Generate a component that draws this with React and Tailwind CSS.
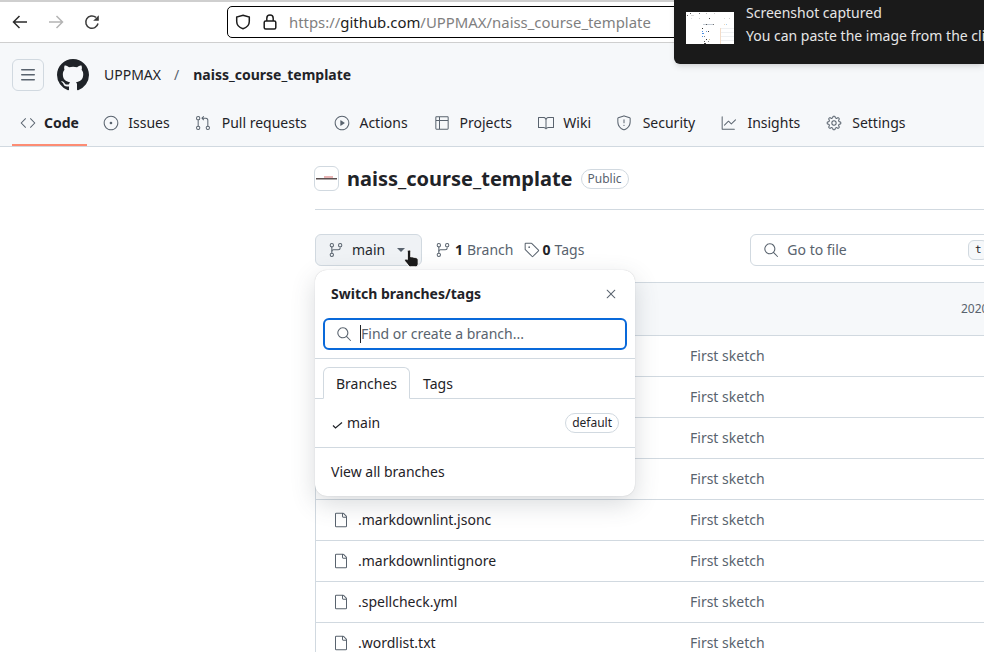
import React from "react";
import {
    GoCode,
    GoIssueOpened,
    GoGitPullRequest,
    GoPlay,
    GoTable,
    GoBook,
    GoShield,
    GoGraph,
    GoGear,
    GoGitBranch,
    GoTag,
    GoSearch,
    GoFile,
    GoX,
} from "react-icons/go";

const tabs = [
    { name: "Code", icon: GoCode, active: true },
    { name: "Issues", icon: GoIssueOpened },
    { name: "Pull requests", icon: GoGitPullRequest },
    { name: "Actions", icon: GoPlay },
    { name: "Projects", icon: GoTable },
    { name: "Wiki", icon: GoBook },
    { name: "Security", icon: GoShield },
    { name: "Insights", icon: GoGraph },
    { name: "Settings", icon: GoGear },
];

const files = [
    ".github",
    ".gitignore",
    ".lycheeignore",
    ".markdownlint.yml",
    ".markdownlint.jsonc",
    ".markdownlintignore",
    ".spellcheck.yml",
    ".wordlist.txt",
];

// little dots of the screenshot thumbnail: x, y, w, h, colour
const thumbDots = [
    [4, 1, 1, 1, "#555"], [13, 1, 1, 1, "#777"], [20, 1, 1, 1, "#bbb"], [28, 1, 1, 1, "#ccc"],
    [1, 3, 1, 1, "#666"], [5, 3, 3, 1, "#ddd"], [5, 6, 1, 1, "#ddd"], [13, 6, 1, 1, "#ccc"],
    [23, 6, 1, 1, "#444"], [38, 6, 1, 1, "#ddd"], [43, 6, 1, 1, "#ccc"], [17, 12, 10, 1, "#c5cdd6"],
    [20, 12, 1, 1, "#555"], [27, 12, 1, 1, "#777"], [38, 12, 1, 1, "#f0d8b8"], [40, 12, 1, 1, "#a8d0ee"],
    [16, 16, 1, 1, "#333"], [16, 19, 1, 1, "#4b8fe0"], [20, 19, 1, 1, "#7aa7d8"], [22, 19, 1, 1, "#444"],
    [16, 21, 2, 1, "#4b8fe0"], [16, 24, 1, 1, "#4b8fe0"], [18, 24, 1, 1, "#888"], [20, 27, 1, 1, "#333"],
    [18, 29, 1, 1, "#555"], [22, 29, 1, 1, "#888"], [23, 27, 1, 1, "#d8c890"], [18, 31, 2, 1, "#444"],
    [34, 16, 14, 1, "#eef0f2"], [34, 20, 14, 1, "#eef0f2"], [34, 24, 14, 1, "#eef0f2"], [34, 28, 14, 1, "#eef0f2"],
    [34, 16, 1, 16, "#f3dcc8"],
];

const BrowserBar = () => (
    <div className="h-[43px] flex items-center bg-white border-t-2 border-b border-[#cfcfcf] shrink-0">
        <div className="w-[227px] flex items-center pl-3 gap-5 shrink-0">
            <svg width="16" height="16" viewBox="0 0 16 16" fill="none" stroke="#2b2b2b" strokeWidth="1.5">
                <path d="M15 8H1.5M7.5 2 1.5 8l6 6" />
            </svg>
            <svg width="16" height="16" viewBox="0 0 16 16" fill="none" stroke="#b4b4b4" strokeWidth="1.5">
                <path d="M1 8h13.5M8.5 2l6 6-6 6" />
            </svg>
            <svg width="16" height="16" viewBox="0 0 16 16" fill="none" stroke="#3a3a3a" strokeWidth="1.5">
                <path d="M14 9.5A6.2 6.2 0 1 1 12 3.4" />
                <path d="M14.8 1.2v5.6H9.2z" fill="#3a3a3a" stroke="none" />
            </svg>
        </div>
        <div className="h-[32px] flex-1 flex items-center border border-black rounded-l-[5px] bg-white pl-[7px] whitespace-nowrap overflow-hidden">
            <svg width="16" height="16" viewBox="0 0 16 16" fill="none" stroke="#1c1c1c" strokeWidth="1.5" className="shrink-0">
                <path d="M8 1.2 14.3 3v4.5c0 3.4-2.7 6-6.3 7.3-3.6-1.3-6.3-3.9-6.3-7.3V3z" />
            </svg>
            <svg width="14" height="16" viewBox="0 0 14 16" fill="none" stroke="#1c1c1c" strokeWidth="1.5" className="ml-[12px] shrink-0">
                <rect x="1.2" y="7" width="11.6" height="8" rx="1.5" />
                <path d="M3.8 7V4.2a3.2 3.2 0 0 1 6.4 0V7" />
            </svg>
            <span className="ml-[12px] text-[14.9px] text-[#7f7f7f]">
                https://<span className="text-[#1c1c1c]">github.com</span>/UPPMAX/naiss_course_template
            </span>
        </div>
    </div>
);

const RepoHeader = () => (
    <div className="h-[104px] bg-[#f6f8fa] border-b border-[#d1d9e0] shrink-0 flex flex-col">
        <div className="flex items-center pl-3 pt-4 h-[48px]">
            <div className="w-8 h-8 flex items-center justify-center border border-[#d1d9e0] rounded-md text-[#59636e] shrink-0">
                <svg width="16" height="16" viewBox="0 0 16 16" fill="currentColor">
                    <path d="M1 2.75A.75.75 0 0 1 1.75 2h12.5a.75.75 0 0 1 0 1.5H1.75A.75.75 0 0 1 1 2.75Zm0 5A.75.75 0 0 1 1.75 7h12.5a.75.75 0 0 1 0 1.5H1.75A.75.75 0 0 1 1 7.75ZM1.75 12h12.5a.75.75 0 0 1 0 1.5H1.75a.75.75 0 0 1 0-1.5Z" />
                </svg>
            </div>
            <svg width="32" height="32" viewBox="0 0 16 16" fill="#1f2328" className="ml-[13px] shrink-0">
                <path d="M8 0c4.42 0 8 3.58 8 8a8.013 8.013 0 0 1-5.45 7.59c-.4.08-.55-.17-.55-.38 0-.27.01-1.13.01-2.2 0-.75-.25-1.23-.54-1.48 1.78-.2 3.65-.88 3.65-3.95 0-.88-.31-1.59-.82-2.15.08-.2.36-1.02-.08-2.12 0 0-.67-.22-2.2.82-.64-.18-1.32-.27-2-.27-.68 0-1.36.09-2 .27-1.53-1.03-2.2-.82-2.2-.82-.44 1.1-.16 1.92-.08 2.12-.51.56-.82 1.28-.82 2.15 0 3.06 1.86 3.75 3.64 3.95-.23.2-.44.55-.51 1.07-.46.21-1.61.55-2.33-.66-.15-.24-.6-.83-1.23-.82-.67.01-.27.38.01.53.34.19.73.9.82 1.13.16.45.68 1.31 2.69.94 0 .67.01 1.3.01 1.49 0 .21-.15.45-.55.38A7.995 7.995 0 0 1 0 8c0-4.42 3.58-8 8-8Z" />
            </svg>
            <span className="ml-[15px] text-sm text-[#1f2328]">UPPMAX</span>
            <span className="ml-[13px] text-sm text-[#59636e]">/</span>
            <span className="ml-[14px] text-sm font-bold text-[#1f2328]">naiss_course_template</span>
        </div>
        <div className="flex items-stretch gap-2 pl-3 flex-1 mt-[8px]">
            {tabs.map((tab) => {
                const Icon = tab.icon;
                return (
                    <div
                        key={tab.name}
                        className={`flex items-center gap-2 px-2 pt-[3px] border-b-2 text-sm text-[#1f2328] ${
                            tab.active ? "border-[#fd8c73]" : "border-transparent"
                        }`}
                    >
                        <Icon size={16} className="text-[#59636e] shrink-0" />
                        {/* the hidden bold copy keeps the tab as wide as when it is selected */}
                        <span className="flex flex-col items-center">
                            <span className="invisible h-0 font-bold">{tab.name}</span>
                            <span className={tab.active ? "font-bold" : ""}>{tab.name}</span>
                        </span>
                    </div>
                );
            })}
        </div>
    </div>
);

const Main = () => (
    <div className="pl-[315px] w-[1200px]">
        <div className="flex items-center h-[63px] border-b border-[#d1d9e0]">
            <div className="w-[25px] h-[25px] -ml-px rounded-md border border-[#d1d9e0] bg-white flex items-center justify-center shrink-0">
                <svg width="21" height="6" viewBox="0 0 21 6">
                    <rect x="0" y="3" width="21" height="1.5" fill="#5a4f4f" />
                    <rect x="8" y="1" width="9" height="2" fill="#e8b4b4" />
                </svg>
            </div>
            <span className="ml-2 mt-px text-xl font-bold text-[#1f2328]">naiss_course_template</span>
            <span className="ml-2 mt-px h-5 px-[6px] flex items-center border border-[#d1d9e0] rounded-full text-xs text-[#59636e]">
                Public
            </span>
        </div>

        <div className="flex items-center mt-6 h-8">
            <div className="w-[107px] h-8 flex items-center pl-3 bg-[#eff2f5] border border-[#d1d9e0] rounded-md text-sm text-[#25292e]">
                <GoGitBranch size={16} className="text-[#59636e]" />
                <span className="ml-2">main</span>
                <span className="ml-[12px] border-x-4 border-t-4 border-x-transparent border-t-[#59636e]" />
            </div>
            <div className="ml-[13px] flex items-center text-sm text-[#59636e]">
                <GoGitBranch size={16} />
                <span className="ml-[4px] font-bold text-[#1f2328]">1</span>
                <span className="ml-1">Branch</span>
            </div>
            <div className="ml-[10px] flex items-center text-sm text-[#59636e]">
                <GoTag size={16} />
                <span className="ml-[3px] font-bold text-[#1f2328]">0</span>
                <span className="ml-1">Tags</span>
            </div>
            <div className="ml-[166px] w-[300px] h-8 flex items-center pl-3 border border-[#d1d9e0] rounded-md text-sm text-[#59636e] relative">
                <GoSearch size={16} />
                <span className="ml-2">Go to file</span>
                <span className="absolute left-[217px] w-5 h-5 flex items-center justify-center bg-[#f6f8fa] border border-[#d1d9e0] rounded-md text-[11px] font-['DejaVu_Sans_Mono',monospace] text-[#1f2328]">
                    t
                </span>
            </div>
        </div>

        <div className="mt-4 border-t border-l border-[#d1d9e0]">
            <div className="h-[53px] bg-[#f6f8fa] border-b border-[#d1d9e0] flex items-center pl-[645px] text-xs text-[#59636e]">
                2020
            </div>
            {files.map((file) => (
                <div key={file} className="h-[41px] flex items-center border-b border-[#d1d9e0] text-sm">
                    <GoFile size={16} className="ml-[17px] text-[#59636e] shrink-0" />
                    <span className="ml-[9px] w-[332px] text-[#1f2328]">{file}</span>
                    <span className="text-[#59636e]">First sketch</span>
                </div>
            ))}
        </div>
    </div>
);

const BranchPopover = () => (
    <div className="absolute left-[315px] top-[270px] w-[320px] h-[226px] bg-white rounded-xl shadow-[0_8px_24px_rgba(66,74,83,0.2),0_0_1px_rgba(31,35,40,0.25)] flex flex-col text-sm text-[#1f2328]">
        <div className="h-[48px] flex items-center justify-between pl-4 pr-4 shrink-0">
            <span className="font-bold">Switch branches/tags</span>
            <GoX size={16} className="text-[#59636e]" />
        </div>
        <div className="px-2 h-[40px] shrink-0">
            <div className="h-[32px] flex items-center pl-[11px] border-2 border-[#0969da] rounded-md text-[#59636e]">
                <GoSearch size={16} className="shrink-0" />
                <span className="ml-2 border-l border-[#1f2328] leading-[18px]">Find or create a branch...</span>
            </div>
        </div>
        <div className="h-[41px] border-t border-b border-[#d1d9e0] flex items-end pl-2 shrink-0">
            <div className="h-[32px] w-[87px] -mb-px pt-px flex items-center justify-center bg-white border border-[#d1d9e0] border-b-white rounded-t-md">
                Branches
            </div>
            <div className="h-[32px] ml-[13px] -mb-px pt-px flex items-center">Tags</div>
        </div>
        <div className="h-[49px] flex items-center pl-[17px] pr-4 border-b border-[#d1d9e0] shrink-0">
            <svg width="11" height="10" viewBox="0 0 11 10" fill="none" stroke="#1f2328" strokeWidth="1.2" className="mt-[3px] shrink-0">
                <path d="M1 5.5 3.5 8 10 2.5" />
            </svg>
            <span className="ml-1">main</span>
            <span className="ml-auto h-5 px-[6px] flex items-center border border-[#d1d9e0] rounded-full text-xs">
                default
            </span>
        </div>
        <div className="flex-1 flex items-center pl-4">View all branches</div>
    </div>
);

const ScreenshotToast = () => (
    <div className="absolute left-[674px] top-0 w-[310px] h-[64px] bg-[#1a1a1a] rounded-bl-md shadow-md flex items-start text-[14px] text-[#e6e6e6] whitespace-nowrap overflow-hidden">
        <svg width="48" height="32" viewBox="0 0 48 32" className="ml-3 mt-3 shrink-0 bg-white">
            {thumbDots.map(([x, y, w, h, color], i) => (
                <rect key={i} x={x} y={y} width={w} height={h} fill={color} />
            ))}
        </svg>
        <div className="ml-3 flex flex-col mt-[1px] leading-[23px]">
            <span>Screenshot captured</span>
            <span>You can paste the image from the clipboard</span>
        </div>
    </div>
);

const HandCursor = () => (
    <svg width="17" height="20" viewBox="0 0 17 20" className="absolute left-[404px] top-[249px]">
        <path
            d="M5.2 1c.9 0 1.6.7 1.6 1.6V8l.8-.2 1 .1 1 .3 1 .2 1 .2 1.2.3c.9.3 1.4 1 1.4 2v3.8c0 1.6-1 3.1-2.4 3.1H6.6c-.9 0-1.6-.4-2.1-1.2L.9 12.2c-.5-.8-.3-1.6.4-2 .7-.4 1.5-.2 2 .4V2.6C3.3 1.7 4.3 1 5.2 1z"
            fill="#1a1a1a"
            stroke="#fff"
            strokeWidth="1"
        />
    </svg>
);

const App = () => {
    return (
        <div className="relative w-[984px] h-[652px] overflow-hidden bg-white font-['Noto_Sans',sans-serif]">
            <BrowserBar />
            <RepoHeader />
            <Main />
            <BranchPopover />
            <HandCursor />
            <ScreenshotToast />
        </div>
    );
};

export default App;
